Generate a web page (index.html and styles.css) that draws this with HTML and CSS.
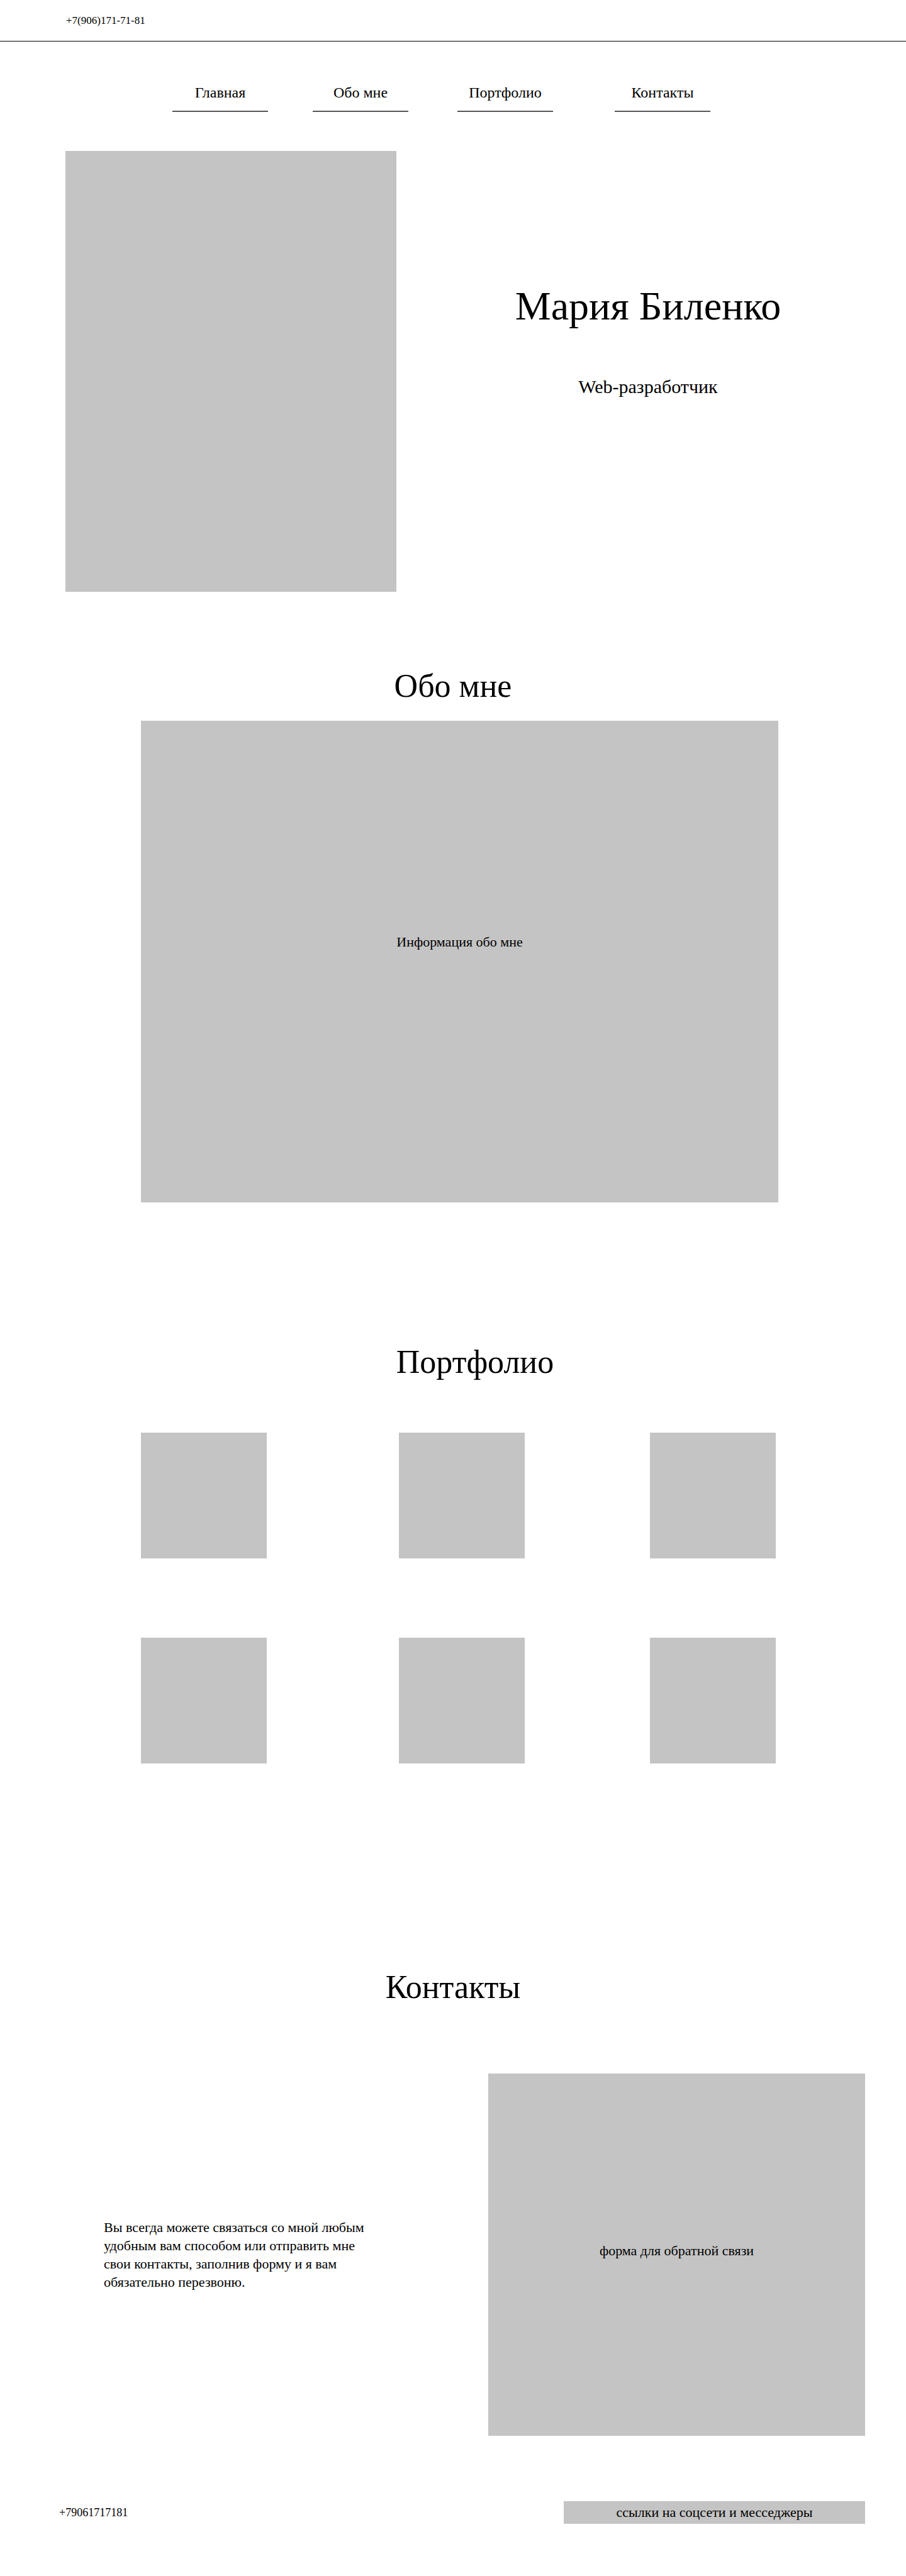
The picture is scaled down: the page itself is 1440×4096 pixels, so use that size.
FILE: index.html
```html
<!DOCTYPE html>
<html lang="ru">
<head>
  <meta charset="utf-8">
  <title>Мария Биленко — портфолио</title>
  <link rel="stylesheet" href="styles.css">
</head>
<body>
  <!-- Top bar with phone -->
  <header class="topbar">
    <span class="topbar-phone">+7(906)171-71-81</span>
  </header>

  <!-- Navigation -->
  <nav class="nav">
    <a class="nav-link" href="#main">Главная</a>
    <a class="nav-link" href="#about">Обо мне</a>
    <a class="nav-link" href="#portfolio">Портфолио</a>
    <a class="nav-link" href="#contacts">Контакты</a>
  </nav>

  <!-- Hero -->
  <section class="hero" id="main">
    <div class="hero-photo"></div>
    <div class="hero-text">
      <h1 class="hero-name">Мария Биленко</h1>
      <p class="hero-role">Web-разработчик</p>
    </div>
  </section>

  <!-- About -->
  <section class="about" id="about">
    <h2 class="section-title">Обо мне</h2>
    <div class="about-box">Информация обо мне</div>
  </section>

  <!-- Portfolio -->
  <section class="portfolio" id="portfolio">
    <h2 class="section-title portfolio-title">Портфолио</h2>
    <div class="works">
      <div class="work"></div>
      <div class="work"></div>
      <div class="work"></div>
      <div class="work"></div>
      <div class="work"></div>
      <div class="work"></div>
    </div>
  </section>

  <!-- Contacts -->
  <section class="contacts" id="contacts">
    <h2 class="section-title">Контакты</h2>
    <div class="contacts-row">
      <p class="contacts-note">Вы всегда можете связаться со мной любым удобным вам способом или отправить мне свои контакты, заполнив форму и я вам обязательно перезвоню.</p>
      <div class="contacts-form">форма для обратной связи</div>
    </div>
  </section>

  <!-- Footer -->
  <footer class="footer">
    <span class="footer-phone">+79061717181</span>
    <div class="footer-links">ссылки на соцсети и месседжеры</div>
  </footer>
</body>
</html>
```

FILE: styles.css
```css
/* General Page Styling */
body {
  margin: 0;
  font-family: 'Liberation Serif', 'Times New Roman', serif;
  background: #fff;
  color: #000;
}
h1, h2, p {
  margin: 0;
  font-weight: normal;
}
/* Top bar */
.topbar {
  height: 66px;
  padding-left: 105px;
  display: flex;
  align-items: center;
  border-bottom: 1px solid #000;
  box-sizing: border-box;
}
.topbar-phone {
  font-size: 17px;
}
/* Navigation */
.nav {
  display: flex;
  padding: 67px 0 0 274px;
}
.nav-link {
  width: 152px;
  margin-right: 71px;
  padding-bottom: 15px;
  text-align: center;
  font-size: 24px;
  line-height: 28px;
  color: #000;
  text-decoration: none;
  border-bottom: 2px solid #555;
}
.nav-link:nth-child(2) {
  margin-right: 78px;
}
.nav-link:nth-child(3) {
  margin-right: 98px;
}
/* Hero */
.hero {
  display: flex;
  padding: 62px 10px 0 104px;
}
.hero-photo {
  width: 526px;
  height: 701px;
  background: #c4c4c4;
  flex-shrink: 0;
}
.hero-text {
  flex: 1;
  text-align: center;
  padding-top: 208px;
}
.hero-name {
  font-size: 64px;
  line-height: 77px;
}
.hero-role {
  margin-top: 72px;
  font-size: 30px;
  line-height: 36px;
}
/* Section titles */
.section-title {
  font-size: 52px;
  line-height: 62px;
  text-align: center;
}
/* About */
.about {
  padding-top: 119px;
}
.about-box {
  width: 1013px;
  height: 766px;
  margin: 24px 0 0 224px;
  background: #c4c4c4;
  display: flex;
  align-items: center;
  justify-content: center;
  padding-bottom: 62px;
  box-sizing: border-box;
  font-size: 22px;
}
/* Portfolio */
.portfolio {
  padding-top: 223px;
}
.portfolio-title {
  padding-left: 70px;
}
.works {
  margin: 81px 0 0 224px;
  display: grid;
  grid-template-columns: 410px 399px 200px;
  row-gap: 126px;
}
.work {
  width: 200px;
  height: 200px;
  background: #c4c4c4;
}
/* Contacts */
.contacts {
  padding-top: 325px;
}
.contacts-row {
  display: flex;
  align-items: center;
  margin-top: 106px;
  padding-left: 165px;
}
.contacts-note {
  width: 430px;
  font-size: 22px;
  line-height: 29px;
}
.contacts-form {
  width: 599px;
  height: 576px;
  margin-left: 181px;
  background: #c4c4c4;
  display: flex;
  align-items: center;
  justify-content: center;
  padding-bottom: 12px;
  box-sizing: border-box;
  font-size: 22px;
}
/* Footer */
.footer {
  display: flex;
  align-items: center;
  justify-content: space-between;
  margin-top: 104px;
  padding: 0 65px 84px 94px;
}
.footer-phone {
  font-size: 18px;
}
.footer-links {
  width: 479px;
  height: 36px;
  background: #c4c4c4;
  display: flex;
  align-items: center;
  justify-content: center;
  font-size: 22px;
}
```
